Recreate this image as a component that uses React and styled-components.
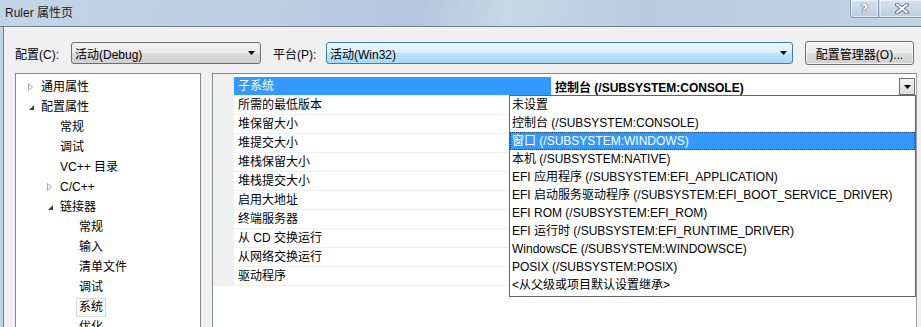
import React from "react";
import styled, { createGlobalStyle, css } from "styled-components";

const GlobalStyle = createGlobalStyle`
  html, body {
    margin: 0;
    padding: 0;
    background: #f0f0f0;
  }
  body {
    font-family: "Liberation Sans", "Noto Sans CJK SC", sans-serif;
    font-size: 12px;
    color: #000;
  }
`;

const treeItems = [
  { label: "通用属性", level: 1, expander: "closed" },
  { label: "配置属性", level: 1, expander: "open" },
  { label: "常规", level: 2 },
  { label: "调试", level: 2 },
  { label: "VC++ 目录", level: 2 },
  { label: "C/C++", level: 2, expander: "closed" },
  { label: "链接器", level: 2, expander: "open" },
  { label: "常规", level: 3 },
  { label: "输入", level: 3 },
  { label: "清单文件", level: 3 },
  { label: "调试", level: 3 },
  { label: "系统", level: 3, selected: true },
  { label: "优化", level: 3 },
];

const properties = [
  "所需的最低版本",
  "堆保留大小",
  "堆提交大小",
  "堆栈保留大小",
  "堆栈提交大小",
  "启用大地址",
  "终端服务器",
  "从 CD 交换运行",
  "从网络交换运行",
  "驱动程序",
];

const options = [
  "未设置",
  "控制台 (/SUBSYSTEM:CONSOLE)",
  "窗口 (/SUBSYSTEM:WINDOWS)",
  "本机 (/SUBSYSTEM:NATIVE)",
  "EFI 应用程序 (/SUBSYSTEM:EFI_APPLICATION)",
  "EFI 启动服务驱动程序 (/SUBSYSTEM:EFI_BOOT_SERVICE_DRIVER)",
  "EFI ROM (/SUBSYSTEM:EFI_ROM)",
  "EFI 运行时 (/SUBSYSTEM:EFI_RUNTIME_DRIVER)",
  "WindowsCE (/SUBSYSTEM:WINDOWSCE)",
  "POSIX (/SUBSYSTEM:POSIX)",
  "<从父级或项目默认设置继承>",
];

function ArrowDown() {
  return (
    <svg width="7" height="4" viewBox="0 0 7 4">
      <path d="M0 0 H7 L3.5 4 Z" fill="#000" />
    </svg>
  );
}

function ExpanderIcon({ state }) {
  if (state === "open") {
    return (
      <svg width="16" height="20" viewBox="0 0 16 20">
        <path d="M9 8 V13 H4 Z" fill="#3c3c3c" />
      </svg>
    );
  }
  return (
    <svg width="16" height="20" viewBox="0 0 16 20">
      <path d="M3.5 6.5 L7.5 10 L3.5 13.5 Z" fill="none" stroke="#a6a6a6" />
    </svg>
  );
}

function CloseGlyph() {
  return (
    <svg width="14" height="11" viewBox="0 0 14 11">
      <path d="M2 1.5 L12 9.5 M12 1.5 L2 9.5" stroke="#6a7482" strokeWidth="4" strokeLinecap="round" />
      <path d="M2 1.5 L12 9.5 M12 1.5 L2 9.5" stroke="#fff" strokeWidth="2" strokeLinecap="round" />
    </svg>
  );
}

export default function App() {
  return (
    <>
      <GlobalStyle />
      <Window>
        <TitleBar>
          <Title>Ruler 属性页</Title>
          <CaptionButtons>
            <CaptionButton>
              <HelpGlyph>?</HelpGlyph>
            </CaptionButton>
            <CaptionButton wide>
              <CloseGlyph />
            </CaptionButton>
          </CaptionButtons>
        </TitleBar>

        <Client>
          <ConfigRow>
            <FieldLabel width={56}>配置(C):</FieldLabel>
            <Combo width={190}>
              <span>活动(Debug)</span>
              <ComboArrow>
                <ArrowDown />
              </ComboArrow>
            </Combo>
            <FieldLabel width={53} gap={12}>
              平台(P):
            </FieldLabel>
            <Combo width={467} hot>
              <span>活动(Win32)</span>
              <ComboArrow>
                <ArrowDown />
              </ComboArrow>
            </Combo>
            <PushButton>配置管理器(O)...</PushButton>
          </ConfigRow>

          <Panes>
            <TreePane>
              {treeItems.map((item, i) => (
                <TreeRow key={i} level={item.level}>
                  <Expander>
                    {item.expander && <ExpanderIcon state={item.expander} />}
                  </Expander>
                  <TreeLabel selected={item.selected}>{item.label}</TreeLabel>
                </TreeRow>
              ))}
            </TreePane>

            <PropPane>
              <PropGrid>
                <Gutter />
                <PropRows>
                  <PropRow>
                    <NameCell selected>子系统</NameCell>
                    <ValueCell>
                      <ValueText>控制台 (/SUBSYSTEM:CONSOLE)</ValueText>
                      <DropButton>
                        <ArrowDown />
                      </DropButton>
                      <DropList>
                        {options.map((opt, i) => (
                          <DropItem key={i} active={i === 2}>
                            {opt}
                          </DropItem>
                        ))}
                      </DropList>
                    </ValueCell>
                  </PropRow>
                  {properties.map((p, i) => (
                    <PropRow key={i}>
                      <NameCell>{p}</NameCell>
                      <ValueCell />
                    </PropRow>
                  ))}
                </PropRows>
              </PropGrid>
            </PropPane>
          </Panes>
        </Client>
      </Window>
    </>
  );
}

const Window = styled.div`
  width: 921px;
  height: 327px;
  overflow: hidden;
  display: flex;
  flex-direction: column;
  background: #c2d2e5;
`;

const TitleBar = styled.div`
  height: 26px;
  flex: none;
  display: flex;
  align-items: flex-start;
  justify-content: space-between;
  background: linear-gradient(
    100deg,
    #c4d4e7 0%,
    #bccee4 30%,
    #b3c6dd 45%,
    #c8d7e9 55%,
    #b9cbe1 70%,
    #c3d3e6 100%
  );
  border-bottom: 1px solid #6f7f92;
`;

const Title = styled.div`
  padding: 5px 0 0 5px;
  line-height: 16px;
  font-size: 12px;
  color: #1a1a1a;
`;

const CaptionButtons = styled.div`
  display: flex;
  margin-right: -4px;
`;

const CaptionButton = styled.div`
  width: ${(p) => (p.wide ? 44 : 27)}px;
  height: 17px;
  display: flex;
  align-items: center;
  justify-content: center;
  border: 1px solid #8a9aae;
  border-top: none;
  border-left-color: ${(p) => (p.wide ? "transparent" : "#8a9aae")};
  border-radius: 0 0 ${(p) => (p.wide ? "0 0" : "0 4px")};
  box-shadow: inset 0 0 0 1px rgba(255, 255, 255, 0.5);
  background: linear-gradient(#d5e1ee, #bccde1);
`;

const HelpGlyph = styled.span`
  font-family: "DejaVu Sans", sans-serif;
  font-weight: bold;
  font-size: 13px;
  line-height: 13px;
  color: #fff;
  text-shadow: 0 0 1px #505a66, 0 0 1px #505a66, 0 0 1px #505a66;
`;

const Client = styled.div`
  flex: 1;
  min-height: 0;
  margin-left: 3px;
  border-left: 1px solid #6f7f92;
  background: #f0f0f0;
  display: flex;
  flex-direction: column;
  padding: 14px 0 0 11px;
`;

const ConfigRow = styled.div`
  display: flex;
  align-items: center;
  height: 24px;
`;

const FieldLabel = styled.div`
  width: ${(p) => p.width}px;
  margin-left: ${(p) => p.gap || 0}px;
  flex: none;
  color: #000;
`;

const Combo = styled.div`
  width: ${(p) => p.width}px;
  height: 22px;
  box-sizing: border-box;
  flex: none;
  display: flex;
  align-items: center;
  justify-content: space-between;
  padding: 0 4px 0 3px;
  border-radius: 3px;
  ${(p) =>
    p.hot
      ? css`
          border: 1px solid #3c7fb1;
          background: linear-gradient(#eaf6fd 0%, #d9f0fc 50%, #bee6fd 51%, #a7d9f5 100%);
        `
      : css`
          border: 1px solid #707070;
          background: linear-gradient(#f2f2f2 0%, #ebebeb 50%, #dddddd 51%, #cfcfcf 100%);
        `}
`;

const ComboArrow = styled.div`
  display: flex;
  align-items: center;
  padding-right: 1px;
`;

const PushButton = styled.div`
  width: 109px;
  height: 24px;
  box-sizing: border-box;
  margin-left: 12px;
  flex: none;
  display: flex;
  align-items: center;
  justify-content: center;
  border: 1px solid #707070;
  border-radius: 3px;
  background: linear-gradient(#f2f2f2 0%, #ebebeb 50%, #dddddd 51%, #cfcfcf 100%);
  box-shadow: inset 0 0 0 1px rgba(255, 255, 255, 0.7);
`;

const Panes = styled.div`
  flex: 1;
  min-height: 0;
  display: flex;
  gap: 11px;
  margin-top: 8px;
  padding-right: 4px;
`;

const TreePane = styled.div`
  width: 186px;
  box-sizing: border-box;
  flex: none;
  background: #fff;
  border: 1px solid #828790;
  border-bottom: none;
  padding-top: 3px;
`;

const TreeRow = styled.div`
  height: 20px;
  display: flex;
  align-items: center;
  padding-left: ${(p) => 9 + (p.level - 1) * 19}px;
`;

const Expander = styled.div`
  width: 16px;
  height: 20px;
  flex: none;
`;

const TreeLabel = styled.span`
  line-height: 15px;
  padding: 1px 2px;
  margin-left: -3px;
  border: 1px solid transparent;
  white-space: nowrap;
  ${(p) =>
    p.selected &&
    css`
      border-color: #d9d9d9;
      background: #f8f8f8;
    `}
`;

const PropPane = styled.div`
  flex: 1;
  background: #fff;
  border: 1px solid #828790;
  border-bottom: none;
  border-right-color: #a0a0a0;
  padding-right: 1px;
`;

const PropGrid = styled.div`
  display: flex;
`;

const Gutter = styled.div`
  width: 21px;
  flex: none;
  background: #f0f0f0;
`;

const PropRows = styled.div`
  flex: 1;
  padding-top: 3px;
`;

const PropRow = styled.div`
  height: 19px;
  box-sizing: border-box;
  display: flex;
  border-bottom: 1px solid #f0f0f0;
`;

const NameCell = styled.div`
  width: 317px;
  flex: none;
  padding-left: 4px;
  box-sizing: border-box;
  line-height: 18px;
  white-space: nowrap;
  ${(p) =>
    p.selected &&
    css`
      background: #3399ff;
      color: #fff;
    `}
`;

const ValueCell = styled.div`
  flex: 1;
  position: relative;
  display: flex;
  align-items: center;
  justify-content: space-between;
  padding-left: 4px;
`;

const ValueText = styled.span`
  font-weight: bold;
  white-space: nowrap;
`;

const DropButton = styled.div`
  width: 16px;
  height: 17px;
  box-sizing: border-box;
  display: flex;
  align-items: center;
  justify-content: center;
  border: 1px solid #6d6d6d;
  background: linear-gradient(#f4f4f4, #dcdcdc);
  align-self: flex-start;
  margin-top: 1px;
`;

const DropList = styled.div`
  position: absolute;
  top: 100%;
  right: -1px;
  width: 407px;
  box-sizing: border-box;
  background: #fff;
  border: 1px solid #646464;
  padding-bottom: 2px;
  z-index: 2;
`;

const DropItem = styled.div`
  height: 18px;
  line-height: 18px;
  box-sizing: border-box;
  padding-left: 2px;
  white-space: nowrap;
  ${(p) =>
    p.active &&
    css`
      background: #3399ff;
      color: #fff;
      outline: 1px dotted rgba(0, 0, 0, 0.55);
      outline-offset: -1px;
    `}
`;
